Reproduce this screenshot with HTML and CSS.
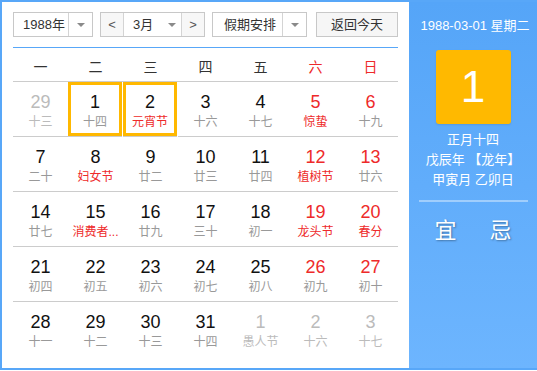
FILE: index.html
```html
<!DOCTYPE html>
<html lang="zh">
<head>
    <meta charset="UTF-8">
    <title>万年历</title>
    <link rel="stylesheet" href="styles.css">
</head>
<body>

<div class="cal">
    <div class="main">
        <div class="toolbar">
            <div class="sel sel-year">
                <span class="sel-text">1988年</span>
                <span class="sel-arrow"><i class="tri"></i></span>
            </div>
            <div class="sel sel-month">
                <span class="step">&lt;</span>
                <span class="sel-text">3月</span>
                <span class="sel-arrow plain"><i class="tri"></i></span>
                <span class="step step-next">&gt;</span>
            </div>
            <div class="sel sel-holiday">
                <span class="sel-text">假期安排</span>
                <span class="sel-arrow"><i class="tri"></i></span>
            </div>
            <div class="btn-today">返回今天</div>
        </div>

        <div class="week">
            <span>一</span><span>二</span><span>三</span><span>四</span><span>五</span>
            <span class="red">六</span><span class="red">日</span>
        </div>

        <div class="days">
            <div class="day other"><b>29</b><em>十三</em></div>
            <div class="day picked"><b>1</b><em>十四</em></div>
            <div class="day picked"><b>2</b><em class="red">元宵节</em></div>
            <div class="day"><b>3</b><em>十六</em></div>
            <div class="day"><b>4</b><em>十七</em></div>
            <div class="day"><b class="red">5</b><em class="red">惊蛰</em></div>
            <div class="day"><b class="red">6</b><em>十九</em></div>

            <div class="day"><b>7</b><em>二十</em></div>
            <div class="day"><b>8</b><em class="red">妇女节</em></div>
            <div class="day"><b>9</b><em>廿二</em></div>
            <div class="day"><b>10</b><em>廿三</em></div>
            <div class="day"><b>11</b><em>廿四</em></div>
            <div class="day"><b class="red">12</b><em class="red">植树节</em></div>
            <div class="day"><b class="red">13</b><em>廿六</em></div>

            <div class="day"><b>14</b><em>廿七</em></div>
            <div class="day"><b>15</b><em class="red">消费者...</em></div>
            <div class="day"><b>16</b><em>廿九</em></div>
            <div class="day"><b>17</b><em>三十</em></div>
            <div class="day"><b>18</b><em>初一</em></div>
            <div class="day"><b class="red">19</b><em class="red">龙头节</em></div>
            <div class="day"><b class="red">20</b><em class="red">春分</em></div>

            <div class="day"><b>21</b><em>初四</em></div>
            <div class="day"><b>22</b><em>初五</em></div>
            <div class="day"><b>23</b><em>初六</em></div>
            <div class="day"><b>24</b><em>初七</em></div>
            <div class="day"><b>25</b><em>初八</em></div>
            <div class="day"><b class="red">26</b><em>初九</em></div>
            <div class="day"><b class="red">27</b><em>初十</em></div>

            <div class="day last"><b>28</b><em>十一</em></div>
            <div class="day last"><b>29</b><em>十二</em></div>
            <div class="day last"><b>30</b><em>十三</em></div>
            <div class="day last"><b>31</b><em>十四</em></div>
            <div class="day last other"><b>1</b><em>愚人节</em></div>
            <div class="day last other"><b>2</b><em>十六</em></div>
            <div class="day last other"><b>3</b><em>十七</em></div>
        </div>
    </div>

    <div class="side">
        <div class="side-date">1988-03-01 星期二</div>
        <div class="side-day">1</div>
        <div class="side-lunar">
            <p>正月十四</p>
            <p>戊辰年 【龙年】</p>
            <p>甲寅月 乙卯日</p>
        </div>
        <div class="side-line"></div>
        <div class="side-yiji"><span>宜</span><span>忌</span></div>
    </div>
</div>

</body>
</html>
```

FILE: styles.css
```css
body { margin: 0; font-family: "Liberation Sans", "Noto Sans CJK SC", sans-serif; color: #333; }
.cal {
    width: 537px;
    height: 370px;
    box-sizing: border-box;
    border: 2px solid #58a7f8;
    border-right: 0;
    display: flex;
    background: #fff;
}
.main { width: 407px; padding: 10px 11px 0 11px; box-sizing: border-box; }

.toolbar { display: flex; height: 25px; font-size: 13px; }
.sel {
    display: flex;
    border: 1px solid #c8c8c8;
    box-sizing: border-box;
    height: 25px;
    line-height: 23px;
    background: #fff;
}
.sel-text { flex: 1; padding-left: 9px; }
.sel-arrow {
    width: 23px;
    border-left: 1px solid #d4d4d4;
    display: flex;
    align-items: center;
    justify-content: center;
}
.sel-arrow.plain { border-left: 0; width: 18px; }
.tri {
    width: 0;
    height: 0;
    border-left: 4px solid transparent;
    border-right: 4px solid transparent;
    border-top: 4px solid #8a8a8a;
}
.sel-year { width: 80px; margin-right: 7px; }
.sel-month { width: 105px; margin-right: 7px; }
.sel-holiday { width: 95px; margin-right: 9px; }
.sel-holiday .sel-text { padding-left: 11px; }
.step {
    width: 22px;
    text-align: center;
    background: #f7f7f7;
    border-right: 1px solid #d4d4d4;
    color: #555;
}
.step-next { border-right: 0; border-left: 1px solid #d4d4d4; }
.btn-today {
    width: 82px;
    box-sizing: border-box;
    border: 1px solid #c8c8c8;
    background: #f6f6f6;
    text-align: center;
    line-height: 23px;
}

.week {
    display: grid;
    grid-template-columns: repeat(7, 1fr);
    margin-top: 10px;
    border-top: 1px solid #58a7f8;
    border-bottom: 1px solid #ccc;
    padding-top: 5px;
    height: 28px;
    line-height: 28px;
    font-size: 14px;
    text-align: center;
    width: 385px;
}
.red { color: #ee2a2a; }

.days { display: grid; grid-template-columns: repeat(7, 1fr); width: 385px; }
.day {
    height: 54px;
    border-bottom: 1px solid #ccc;
    text-align: center;
    padding-top: 10px;
    box-sizing: content-box;
    height: 44px;
}
.day.last { border-bottom: 0; }
.day b { display: block; font-weight: normal; font-size: 18px; line-height: 20px; color: #111; }
.day em { display: block; font-style: normal; font-size: 12px; line-height: 20px; color: #999; }
.day b.red, .day em.red { color: #ee2a2a; }
.day.other b, .day.other em { color: #bbb; }
.day.picked { box-shadow: inset 0 0 0 3px #ffb800; margin-right: 1px; }

.side {
    flex: 1;
    background: linear-gradient(#55a5f8, #6db5fe);
    color: #fff;
    text-align: center;
    padding-top: 14px;
}
.side-date { font-size: 13px; line-height: 20px; padding-left: 4px; }
.side-day {
    width: 75px;
    height: 74px;
    margin: 14px auto 0;
    background: #ffb900;
    border-radius: 3px;
    font-size: 44px;
    line-height: 74px;
    box-shadow: 0 1px 2px rgba(0, 0, 0, 0.1);
}
.side-lunar { margin-top: 6px; font-size: 13px; line-height: 20px; }
.side-lunar p { margin: 0; }
.side-line { height: 2px; background: rgba(255, 255, 255, 0.4); margin: 10px 9px 0 10px; }
.side-yiji {
    display: flex;
    justify-content: center;
    gap: 33px;
    margin-top: 14px;
    font-size: 22px;
    line-height: 30px;
    text-shadow: 1px 1px 2px rgba(0, 0, 0, 0.35);
}
```
